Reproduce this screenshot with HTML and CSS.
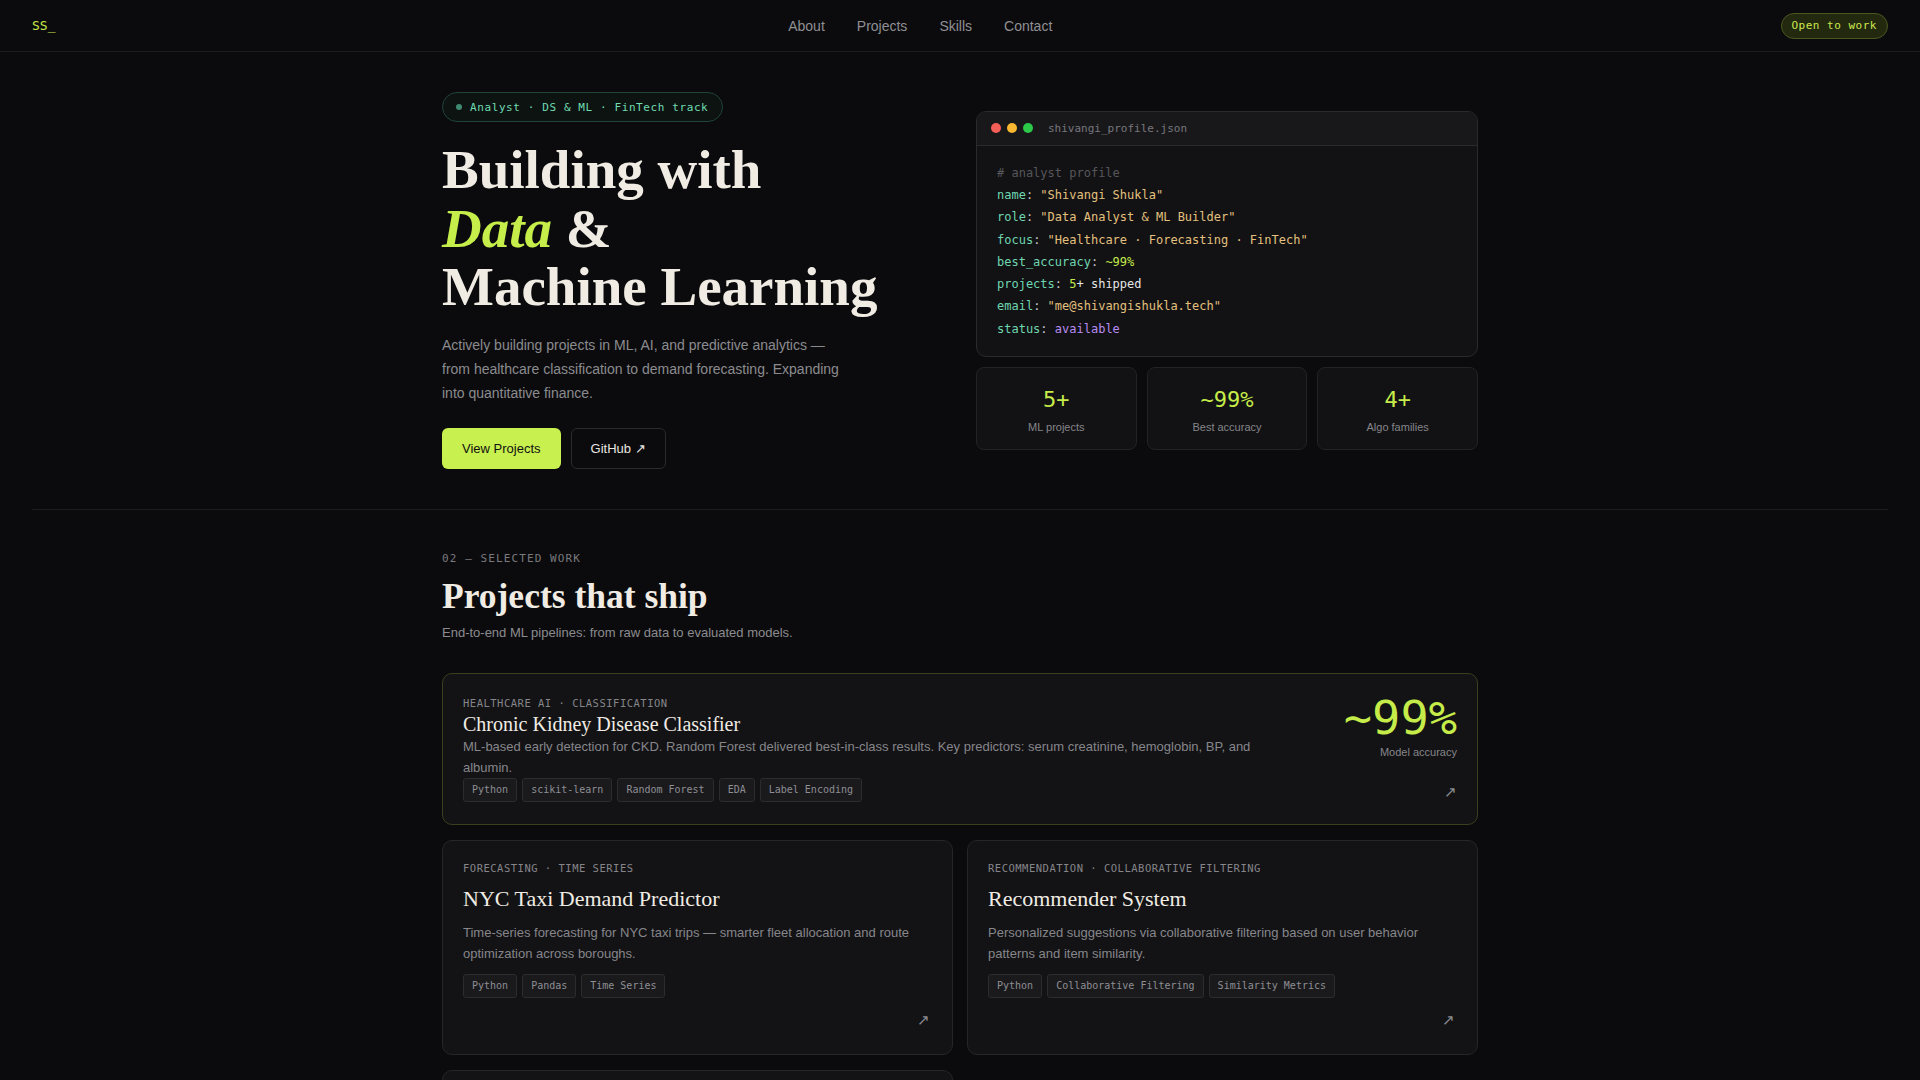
FILE: index.html
```html
<!DOCTYPE html>
<html lang="en">
<head>
<meta charset="utf-8">
<title>Shivangi Shukla — Data &amp; ML</title>
<link rel="stylesheet" href="styles.css">
</head>
<body>
<header class="nav">
  <div class="logo">SS_</div>
  <nav class="links">
    <a href="#about">About</a>
    <a href="#projects">Projects</a>
    <a href="#skills">Skills</a>
    <a href="#contact">Contact</a>
  </nav>
  <div class="status-pill">Open to work</div>
</header>

<main>
  <section class="hero container">
    <div class="hero-left">
      <div class="badge"><span class="badge-dot"></span>Analyst · DS &amp; ML · FinTech track</div>
      <h1 class="hero-title">Building with<br><em>Data</em> &amp;<br>Machine Learning</h1>
      <p class="hero-text">Actively building projects in ML, AI, and predictive analytics — from healthcare classification to demand forecasting. Expanding into quantitative finance.</p>
      <div class="actions">
        <a class="btn btn-primary" href="#projects">View Projects</a>
        <a class="btn btn-ghost" href="#github">GitHub ↗</a>
      </div>
    </div>
    <div class="hero-right">
      <div class="window">
        <div class="window-bar">
          <span class="wdot red"></span><span class="wdot yellow"></span><span class="wdot green"></span>
          <span class="window-name">shivangi_profile.json</span>
        </div>
        <div class="code">
          <div class="c-comment"># analyst profile</div>
          <div><span class="c-key">name</span>: <span class="c-str">"Shivangi Shukla"</span></div>
          <div><span class="c-key">role</span>: <span class="c-str">"Data Analyst &amp; ML Builder"</span></div>
          <div><span class="c-key">focus</span>: <span class="c-str">"Healthcare · Forecasting · FinTech"</span></div>
          <div><span class="c-key">best_accuracy</span>: <span class="c-num">~99%</span></div>
          <div><span class="c-key">projects</span>: <span class="c-num">5</span><span class="c-plain">+ shipped</span></div>
          <div><span class="c-key">email</span>: <span class="c-str">"me@shivangishukla.tech"</span></div>
          <div><span class="c-key">status</span>: <span class="c-purple">available</span></div>
        </div>
      </div>
      <div class="stats">
        <div class="stat"><div class="stat-num">5+</div><div class="stat-label">ML projects</div></div>
        <div class="stat"><div class="stat-num">~99%</div><div class="stat-label">Best accuracy</div></div>
        <div class="stat"><div class="stat-num">4+</div><div class="stat-label">Algo families</div></div>
      </div>
    </div>
  </section>

  <hr class="divider">

  <section class="work container" id="projects">
    <div class="eyebrow">02 — SELECTED WORK</div>
    <h2 class="section-title">Projects that ship</h2>
    <p class="section-sub">End-to-end ML pipelines: from raw data to evaluated models.</p>

    <div class="grid">
      <article class="card featured">
        <div class="feat-main">
          <div class="card-label">HEALTHCARE AI · CLASSIFICATION</div>
          <h3 class="feat-title">Chronic Kidney Disease Classifier</h3>
          <p class="feat-desc">ML-based early detection for CKD. Random Forest delivered best-in-class results. Key predictors: serum creatinine, hemoglobin, BP, and albumin.</p>
          <div class="tags">
            <span class="tag">Python</span><span class="tag">scikit-learn</span><span class="tag">Random Forest</span><span class="tag">EDA</span><span class="tag">Label Encoding</span>
          </div>
        </div>
        <div class="feat-side">
          <div class="feat-num">~99%</div>
          <div class="feat-num-label">Model accuracy</div>
          <div class="arrow">↗</div>
        </div>
      </article>

      <article class="card">
        <div class="card-label">FORECASTING · TIME SERIES</div>
        <h3 class="card-title">NYC Taxi Demand Predictor</h3>
        <p class="card-desc">Time-series forecasting for NYC taxi trips — smarter fleet allocation and route optimization across boroughs.</p>
        <div class="tags">
          <span class="tag">Python</span><span class="tag">Pandas</span><span class="tag">Time Series</span>
        </div>
        <div class="card-foot"><span class="arrow">↗</span></div>
      </article>

      <article class="card">
        <div class="card-label">RECOMMENDATION · COLLABORATIVE FILTERING</div>
        <h3 class="card-title">Recommender System</h3>
        <p class="card-desc">Personalized suggestions via collaborative filtering based on user behavior patterns and item similarity.</p>
        <div class="tags">
          <span class="tag">Python</span><span class="tag">Collaborative Filtering</span><span class="tag">Similarity Metrics</span>
        </div>
        <div class="card-foot"><span class="arrow">↗</span></div>
      </article>

      <article class="card">
        <div class="card-label">FINTECH · QUANT</div>
        <h3 class="card-title">Stock Trend Analyzer</h3>
        <p class="card-desc">Exploratory analysis of market data with rolling indicators and baseline predictive models.</p>
        <div class="tags">
          <span class="tag">Python</span><span class="tag">NumPy</span><span class="tag">Matplotlib</span>
        </div>
        <div class="card-foot"><span class="arrow">↗</span></div>
      </article>
    </div>
  </section>
</main>
</body>
</html>
```

FILE: styles.css
```css
* { box-sizing: border-box; }

html, body {
  margin: 0;
  padding: 0;
  background: #0b0b0d;
  color: #f0ece4;
  font-family: "Liberation Sans", Arial, sans-serif;
}

a { text-decoration: none; color: inherit; }

.container {
  width: 1036px;
  margin: 0 auto;
}

/* NAV */
.nav {
  height: 52px;
  display: flex;
  align-items: center;
  justify-content: space-between;
  padding: 0 32px;
  border-bottom: 1px solid #1c1c20;
}
.logo {
  font-family: "DejaVu Sans Mono", monospace;
  font-size: 13px;
  color: #c6e84a;
  width: 24px;
}
.links {
  display: flex;
  gap: 32px;
  font-size: 14px;
  padding-left: 4px;
}
.links a { color: #8f8f94; }
.status-pill {
  font-family: "DejaVu Sans Mono", monospace;
  font-size: 11px;
  letter-spacing: 0.5px;
  color: #cde84e;
  background: #23290f;
  border: 1px solid #4b5720;
  border-radius: 13px;
  height: 26px;
  line-height: 24px;
  padding: 0 10px;
}

/* HERO */
.hero {
  display: grid;
  grid-template-columns: 1fr 1fr;
  gap: 32px;
  align-items: center;
  padding: 40px 0 40px;
}
.badge {
  display: inline-flex;
  align-items: center;
  height: 30px;
  padding: 0 14px 0 13px;
  border: 1px solid #1f4438;
  border-radius: 15px;
  background: #0d1311;
  font-family: "DejaVu Sans Mono", monospace;
  font-size: 11px;
  letter-spacing: 0.6px;
  color: #6fdcb2;
}
.badge-dot {
  width: 6px;
  height: 6px;
  border-radius: 50%;
  background: #3f8a70;
  margin-right: 8px;
}
.hero-title {
  margin: 19px 0 0;
  font-family: "Liberation Serif", "Times New Roman", serif;
  font-weight: 700;
  font-size: 55px;
  line-height: 58.6px;
  color: #f0ece4;
}
.hero-title em {
  color: #c6ee4a;
  font-style: italic;
}
.hero-text {
  margin: 16px 0 0;
  max-width: 405px;
  font-size: 14px;
  line-height: 24px;
  color: #8b8b8f;
}
.actions {
  display: flex;
  gap: 10px;
  margin-top: 23px;
}
.btn {
  display: inline-block;
  height: 41px;
  line-height: 39px;
  padding: 0 19px;
  border-radius: 6px;
  font-size: 13px;
  border: 1px solid transparent;
}
.btn-primary {
  background: #c8f04e;
  color: #111;
}
.btn-ghost {
  border-color: #2a2a2f;
  color: #e8e6e0;
  padding: 0 19px;
}

/* Code window */
.window {
  border: 1px solid #2a2a2e;
  border-radius: 10px;
  background: #121214;
  overflow: hidden;
}
.window-bar {
  height: 34px;
  display: flex;
  align-items: center;
  padding: 0 14px;
  background: #18181b;
  border-bottom: 1px solid #2a2a2e;
}
.wdot {
  width: 10px;
  height: 10px;
  border-radius: 50%;
  margin-right: 6px;
}
.wdot.red { background: #f25f57; }
.wdot.yellow { background: #f7b731; }
.wdot.green { background: #2cc84a; }
.window-name {
  margin-left: 9px;
  font-family: "DejaVu Sans Mono", monospace;
  font-size: 11px;
  color: #77777c;
}
.code {
  padding: 16px 20px 16px;
  font-family: "DejaVu Sans Mono", monospace;
  font-size: 12px;
  line-height: 22.3px;
  color: #c9c9cc;
}
.c-comment { color: #56565b; }
.c-key { color: #6fd6b0; }
.c-str { color: #e3c07e; }
.c-num { color: #c6ec4a; }
.c-plain { color: #e6e6e6; }
.c-purple { color: #b78cf2; }

.stats {
  margin-top: 10px;
  display: grid;
  grid-template-columns: repeat(3, 1fr);
  gap: 10px;
}
.stat {
  height: 83px;
  border: 1px solid #232327;
  border-radius: 8px;
  background: #121214;
  text-align: center;
  padding-top: 18px;
}
.stat-num {
  font-family: "DejaVu Sans Mono", monospace;
  font-size: 22px;
  line-height: 28px;
  color: #c6ec4a;
}
.stat-label {
  margin-top: 6px;
  font-size: 11px;
  line-height: 15px;
  color: #85858a;
}

.divider {
  margin: 0 32px;
  border: 0;
  border-top: 1px solid #1d1d21;
  height: 0;
}

/* WORK */
.work { padding-top: 41px; }
.eyebrow {
  font-family: "DejaVu Sans Mono", monospace;
  font-size: 11px;
  letter-spacing: 1.1px;
  line-height: 16px;
  color: #7a7a7f;
}
.section-title {
  margin: 8px 0 0;
  font-family: "Liberation Serif", "Times New Roman", serif;
  font-weight: 700;
  font-size: 35.5px;
  line-height: 1.2;
  color: #f0ece4;
}
.section-sub {
  margin: 6px 0 0;
  font-size: 13px;
  line-height: 20px;
  color: #8b8b8f;
}

.grid {
  margin-top: 30px;
  display: grid;
  grid-template-columns: 1fr 1fr;
  gap: 15px 14px;
}
.card {
  background: #131315;
  border: 1px solid #26262a;
  border-radius: 10px;
  padding: 20px 20px 24px;
  display: flex;
  flex-direction: column;
}
.card.featured {
  grid-column: 1 / 3;
  flex-direction: row;
  justify-content: space-between;
  border-color: #3a401f;
  padding: 22px 20px;
}
.feat-main { flex: 1; }
.card-label {
  font-family: "DejaVu Sans Mono", monospace;
  font-size: 10.5px;
  letter-spacing: 0.5px;
  line-height: 14px;
  color: #85858a;
}
.feat-title {
  margin: 2px 0 0;
  font-family: "Liberation Serif", "Times New Roman", serif;
  font-weight: 400;
  font-size: 20px;
  line-height: 24px;
  color: #f0ece4;
}
.feat-desc {
  margin: 0;
  max-width: 800px;
  font-size: 13px;
  line-height: 21px;
  color: #86868b;
}
.feat-side {
  display: flex;
  flex-direction: column;
  align-items: flex-end;
}
.feat-num {
  font-family: "DejaVu Sans Mono", monospace;
  font-size: 47px;
  line-height: 1;
  color: #c6ec4a;
  margin-top: -2px;
}
.feat-num-label {
  margin-top: 4px;
  font-size: 11px;
  line-height: 15px;
  color: #85858a;
}
.arrow {
  font-size: 15px;
  line-height: 20px;
  color: #8a8a8f;
}
.feat-side .arrow { margin-top: auto; }

.card-title {
  margin: 11px 0 0;
  font-family: "Liberation Serif", "Times New Roman", serif;
  font-weight: 400;
  font-size: 22px;
  line-height: 1.2;
  color: #f0ece4;
}
.card-desc {
  margin: 9px 0 0;
  font-size: 13px;
  line-height: 21px;
  color: #86868b;
}
.tags {
  display: flex;
  flex-wrap: wrap;
  gap: 5px;
  margin-top: 10px;
}
.featured .tags { margin-top: 0; }
.tag {
  font-family: "DejaVu Sans Mono", monospace;
  font-size: 10px;
  line-height: 14px;
  padding: 4px 8px;
  border: 1px solid #2b2b30;
  border-radius: 3px;
  background: #1a1a1d;
  color: #8e8e93;
}
.card-foot {
  display: flex;
  justify-content: flex-end;
  margin-top: 12px;
  padding-right: 2px;
}
```
